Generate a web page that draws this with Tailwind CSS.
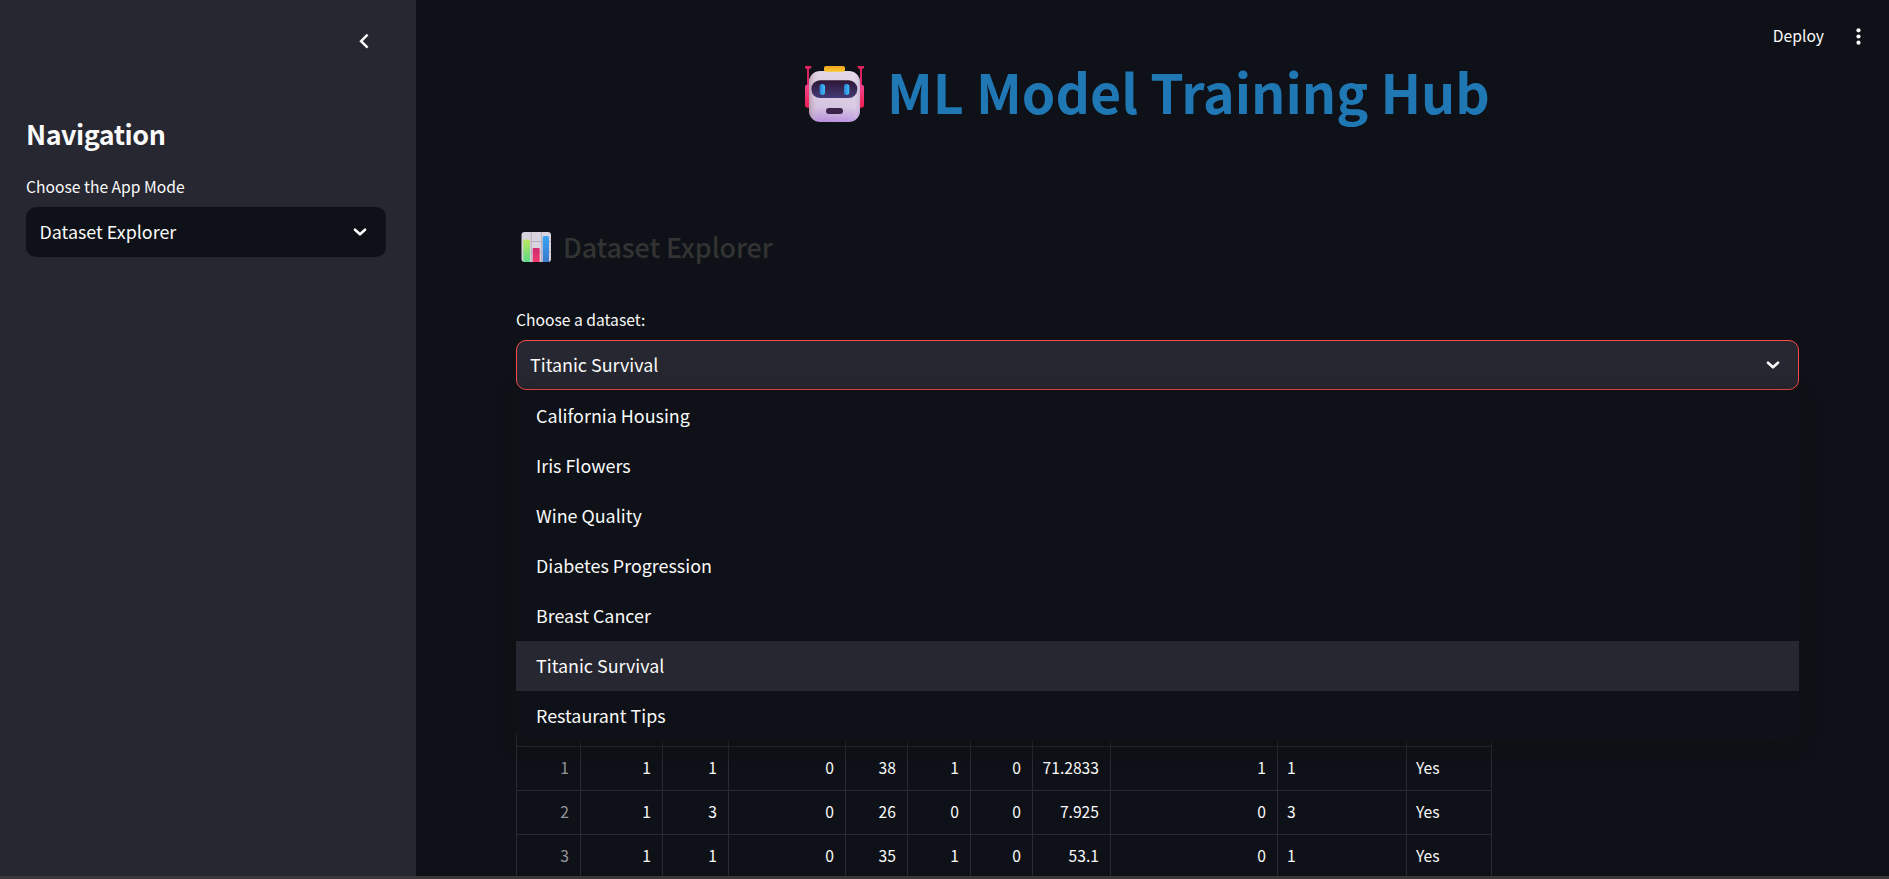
<!DOCTYPE html>
<html lang="en">
<head>
<meta charset="utf-8">
<title>ML Model Training Hub</title>
<script src="https://cdn.jsdelivr.net/npm/@tailwindcss/browser@4"></script>
</head>
<body class="flex h-[879px] w-[1889px] flex-col overflow-hidden bg-[#0e1117] font-['Noto_Sans_CJK_SC','Noto_Sans',sans-serif] text-[#fafafa]">
<div class="flex min-h-0 flex-1 overflow-hidden">
  <aside class="flex w-[416px] shrink-0 flex-col bg-[#262730] px-[26px]">
    <div class="flex h-[82px] items-center justify-end pr-[14px]">
      <svg class="size-[25px]" viewBox="0 0 25 25" fill="none" stroke="#fafafa" stroke-width="2.5"><path d="M16.6 5.7 10.1 12.200 16.6 18.700"/></svg>
    </div>
    <h2 class="mt-[34px] text-[26.86px] leading-[36px] font-bold tracking-[-0.45px]"><span class="whitespace-nowrap">Navigation</span></h2>
    <label class="mt-[23px] text-[15.67px] leading-[24px]"><span class="whitespace-nowrap">Choose the App Mode</span></label>
    <div class="mt-[8px] flex h-[50px] w-[360px] items-center justify-between rounded-[10px] bg-[#0e1117] pr-[14px] pl-[13.5px] text-[17.9px] leading-[28px]">
      <span class="pb-[2px]">Dataset Explorer</span>
      <svg class="size-6" viewBox="0 0 24 24" fill="none" stroke="#fafafa" stroke-width="2.6" stroke-linecap="round" stroke-linejoin="round"><path d="M7 9.7 12 14.3 17 9.7"/></svg>
    </div>
  </aside>
  <main class="relative flex min-w-0 flex-1 flex-col pl-[100px]">
    <header class="absolute top-0 right-0 flex h-[73px] items-center pr-[18px] text-[15.67px] leading-[24px]">
      <span class="pb-[2px]">Deploy</span>
      <svg class="ml-[22px] size-[25px]" viewBox="0 0 25 25" fill="#fafafa"><circle cx="12.5" cy="6.3" r="2.1"/><circle cx="12.5" cy="12.5" r="2.1"/><circle cx="12.5" cy="18.7" r="2.1"/></svg>
    </header>
    <h1 class="mt-[54px] flex h-[74px] shrink-0 items-center pl-[288px] text-[53.7px] leading-[72px] font-bold text-[#1f77b4]">
      <svg class="mt-[5px] h-[58px] w-[61px] shrink-0" viewBox="72 75 183 174">
        <defs>
          <linearGradient id="face" x1="0" y1="0" x2="0" y2="1"><stop offset="0" stop-color="#e3d6e6"/><stop offset=".7" stop-color="#d5c4e0"/><stop offset="1" stop-color="#b78fdc"/></linearGradient>
          <linearGradient id="side" x1="0" x2="1"><stop offset="0" stop-color="#a98c9c" stop-opacity=".7"/><stop offset=".18" stop-color="#d9c9d9" stop-opacity="0"/><stop offset=".85" stop-color="#fff" stop-opacity=".1"/><stop offset="1" stop-color="#b9a4cf" stop-opacity=".5"/></linearGradient>
          <linearGradient id="visor" x1="0" y1="0" x2="0" y2="1"><stop offset="0" stop-color="#2e1734"/><stop offset="1" stop-color="#443a78"/></linearGradient>
          <linearGradient id="ear" x1="0" y1="0" x2="0" y2="1"><stop offset="0" stop-color="#f5468f"/><stop offset="1" stop-color="#ef1d50"/></linearGradient>
          <linearGradient id="hat" x1="0" y1="0" x2="0" y2="1"><stop offset="0" stop-color="#f4a425"/><stop offset="1" stop-color="#fbc928"/></linearGradient>
          <linearGradient id="eye" x1="0" x2="1"><stop offset="0" stop-color="#2b83d6"/><stop offset="1" stop-color="#43bdfb"/></linearGradient>
        </defs>
        <path d="M75 78H94V84L87 88V140H81V88L75 84Z" fill="#dd2460"/>
        <path d="M233 78H252V84L246 88V140H240V88L233 84Z" fill="#dd2460"/>
        <rect x="75" y="134" width="20" height="69" rx="7" fill="url(#ear)"/>
        <rect x="232" y="134" width="20" height="69" rx="7" fill="url(#ear)"/>
        <rect x="87" y="93" width="153" height="153" rx="34" fill="url(#face)"/>
        <rect x="87" y="93" width="153" height="153" rx="34" fill="url(#side)"/>
        <rect x="132" y="78" width="63" height="17" rx="6" fill="url(#hat)"/>
        <rect x="94" y="121" width="138" height="53" rx="26" fill="url(#visor)"/>
        <rect x="119" y="132" width="16" height="33" rx="8" fill="url(#eye)"/>
        <rect x="192" y="132" width="16" height="33" rx="8" fill="url(#eye)"/>
        <rect x="138" y="204" width="51" height="18" rx="9" fill="#3a2348"/>
      </svg>
      <span class="ml-[22px] whitespace-nowrap">ML Model Training Hub</span>
    </h1>
    <h3 class="mt-[99px] flex h-[40px] shrink-0 items-center pl-[5px] text-[26.86px] leading-[40px] font-medium tracking-[-0.1px] text-[#333333]">
      <svg class="h-[30px] w-[30px] shrink-0" viewBox="0 0 30 30">
        <defs>
          <linearGradient id="green" x1="0" y1="0" x2="0" y2="1"><stop offset="0" stop-color="#b9e85c"/><stop offset="1" stop-color="#5fd98a"/></linearGradient>
          <linearGradient id="red" x1="0" y1="0" x2="0" y2="1"><stop offset="0" stop-color="#cf2c6e"/><stop offset="1" stop-color="#f0386c"/></linearGradient>
          <linearGradient id="blue" x1="0" y1="0" x2="0" y2="1"><stop offset="0" stop-color="#38a4f8"/><stop offset="1" stop-color="#3c78c8"/></linearGradient>
        </defs>
        <rect x="0.500" width="29.500" height="30" rx="3" fill="#d9d3df"/>
        <path d="M10.300 0V30M20.500 0V30M0.500 9.5H30M0.500 20H30" stroke="#b9b1c0" stroke-width="1"/>
        <path d="M2.300 30V9Q2.300 7.500 3.800 7.500H7.500Q9 7.500 9 9V30Z" fill="url(#green)"/>
        <path d="M11.700 30V17Q11.700 16 12.700 16H17.700Q18.700 16 18.700 17V30Z" fill="url(#red)"/>
        <path d="M21.700 30V5.500Q21.700 4 23.200 4H26.500Q28 4 28 5.500V30Z" fill="url(#blue)"/>
      </svg>
      <span class="ml-[12px] whitespace-nowrap">Dataset Explorer</span>
    </h3>
    <label class="mt-[41px] shrink-0 text-[15.67px] leading-[24px]"><span class="whitespace-nowrap">Choose a dataset:</span></label>
    <div class="relative mt-[8px] w-[1283px] shrink-0">
      <div class="flex h-[50px] items-center justify-between rounded-[10px] border border-[#ff4b4b] bg-[#262730] pr-[13px] pl-[13px] text-[17.9px] leading-[28px]">
        <span class="pb-[2px]">Titanic Survival</span>
        <svg class="size-6" viewBox="0 0 24 24" fill="none" stroke="#fafafa" stroke-width="2.6" stroke-linecap="round" stroke-linejoin="round"><path d="M7 9.7 12 14.3 17 9.7"/></svg>
      </div>
      <ul class="absolute top-[51px] left-0 z-10 w-full rounded-b-[10px] bg-[#0e1117] text-[17.9px] leading-[49px] shadow-[0_5px_20px_rgba(16,16,16,0.6)]">
        <li class="h-[50px] pl-[20px]">California Housing</li>
        <li class="h-[50px] pl-[20px]">Iris Flowers</li>
        <li class="h-[50px] pl-[20px]">Wine Quality</li>
        <li class="h-[50px] pl-[20px]">Diabetes Progression</li>
        <li class="h-[50px] pl-[20px]">Breast Cancer</li>
        <li class="h-[50px] bg-[#262730] pl-[20px]">Titanic Survival</li>
        <li class="h-[50px] pl-[20px]">Restaurant Tips</li>
      </ul>
    </div>
    <div id="table" class="mt-[313.25px] grid w-[976px] shrink-0 grid-cols-[64px_82px_66px_117px_62px_63px_62px_78px_167px_129px_85px] border-l border-[#292b30] text-[15.67px] leading-[42px]"></div>
  </main>
</div>
<div class="h-[3px] shrink-0 bg-[#3a3838]"></div>
<script>
  const rows = [
    ['', '', '', '', '', '', '', '', '', '', ''],
    ['1', '1', '1', '0', '38', '1', '0', '71.2833', '1', '1', 'Yes'],
    ['2', '1', '3', '0', '26', '0', '0', '7.925', '0', '3', 'Yes'],
    ['3', '1', '1', '0', '35', '1', '0', '53.1', '0', '1', 'Yes'],
  ];
  const table = document.getElementById('table');
  for (const row of rows) {
    row.forEach((value, column) => {
      const cell = document.createElement('div');
      cell.className = 'h-[43.75px] border-r border-b border-[#292b30] pl-[9px] pr-[11px] ' +
        (column >= 9 ? 'text-left' : 'text-right') + (column === 0 ? ' text-[#94959a]' : '');
      cell.textContent = value;
      table.append(cell);
    });
  }
</script>
</body>
</html>
